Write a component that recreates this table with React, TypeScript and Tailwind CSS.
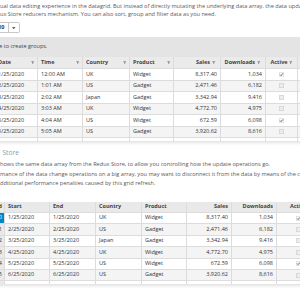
import React from 'react';

type Row = {
  date: string;
  time: string;
  country: string;
  product: string;
  sales: string;
  downloads: string;
  active: boolean;
};

const rows: Row[] = [
  { date: '1/25/2020', time: '12:00 AM', country: 'UK', product: 'Widget', sales: '8,317.40', downloads: '1,034', active: true },
  { date: '2/25/2020', time: '1:01 AM', country: 'US', product: 'Gadget', sales: '2,471.46', downloads: '6,182', active: false },
  { date: '3/25/2020', time: '2:02 AM', country: 'Japan', product: 'Gadget', sales: '3,342.94', downloads: '9,416', active: false },
  { date: '4/25/2020', time: '3:03 AM', country: 'UK', product: 'Widget', sales: '4,772.70', downloads: '4,975', active: false },
  { date: '5/25/2020', time: '4:04 AM', country: 'US', product: 'Widget', sales: '672.59', downloads: '6,098', active: true },
  { date: '6/25/2020', time: '5:05 AM', country: 'US', product: 'Gadget', sales: '3,920.62', downloads: '8,616', active: false },
  { date: '7/25/2020', time: '6:06 AM', country: 'Japan', product: 'Gadget', sales: '7,133.11', downloads: '1,453', active: false },
];

function FilterIcon() {
  return (
    <svg className="w-[3.5px] h-[3.5px] shrink-0" viewBox="0 0 6 6">
      <path d="M0 0.5h6L3.7 3.2V6L2.3 5V3.2z" fill="#8a8a8a" />
    </svg>
  );
}

function Check({ on }: { on: boolean }) {
  return (
    <svg className="w-[5px] h-[5px]" viewBox="0 0 10 10">
      <rect x="0.5" y="0.5" width="9" height="9" rx="1" fill={on ? '#fff' : '#ececec'} stroke="#b5b5b5" />
      {on && <path d="M2.3 5.2l1.9 1.9 3.6-4.2" fill="none" stroke="#333" strokeWidth="1.6" />}
    </svg>
  );
}

const cell = 'shrink-0 flex items-center px-[3px] border-r border-b border-[#dcdcdc] whitespace-nowrap';

function GridTop() {
  return (
    <div className="h-[84px] overflow-hidden -ml-[5px] w-[320px] shadow-[0_2px_3px_rgba(0,0,0,0.12)]">
      <div className="flex h-[12px] bg-[#ebebeb] font-bold text-[#444]">
        <div className={`${cell} w-[43px] justify-between border-[#cfcfcf]`}>Date<FilterIcon /></div>
        <div className={`${cell} w-[45px] justify-between border-[#cfcfcf]`}>Time<FilterIcon /></div>
        <div className={`${cell} w-[47px] justify-between border-[#cfcfcf]`}>Country<FilterIcon /></div>
        <div className={`${cell} w-[44px] justify-between border-[#cfcfcf]`}>Product<FilterIcon /></div>
        <div className={`${cell} w-[47px] justify-end gap-[2px] border-[#cfcfcf] pr-[4.5px]`}>Sales<FilterIcon /></div>
        <div className={`${cell} w-[45px] justify-end gap-[2px] border-[#cfcfcf] pr-[4.5px]`}>Downloads<FilterIcon /></div>
        <div className={`${cell} w-[32px] justify-between border-[#cfcfcf] pr-[4.5px]`}><span className="flex-1 text-center">Active</span><FilterIcon /></div>
        <div className={`${cell} w-[30px] border-[#cfcfcf]`} />
      </div>
      {rows.map((r, i) => (
        <div key={i} className={`flex h-[11.5px] text-[#333] ${i % 2 ? 'bg-[#f4f4f4]' : 'bg-white'}`}>
          <div className={`${cell} w-[43px]`}>{r.date}</div>
          <div className={`${cell} w-[45px]`}>{r.time}</div>
          <div className={`${cell} w-[47px]`}>{r.country}</div>
          <div className={`${cell} w-[44px]`}>{r.product}</div>
          <div className={`${cell} w-[47px] justify-end`}>{r.sales}</div>
          <div className={`${cell} w-[45px] justify-end`}>{r.downloads}</div>
          <div className={`${cell} w-[32px] justify-center`}><Check on={r.active} /></div>
          <div className={`${cell} w-[30px]`} />
        </div>
      ))}
    </div>
  );
}

function GridBottom() {
  return (
    <div className="h-[82px] overflow-hidden -ml-[9px] w-[340px] shadow-[0_2px_3px_rgba(0,0,0,0.12)]">
      <div className="flex h-[11px] bg-[#e9e9e9] font-bold text-[#444]">
        <div className={`${cell} w-[14px] justify-end pr-[2px] border-[#cfcfcf]`}>Id</div>
        <div className={`${cell} w-[45px] border-[#cfcfcf]`}>Start</div>
        <div className={`${cell} w-[46px] border-[#cfcfcf]`}>End</div>
        <div className={`${cell} w-[46px] border-[#cfcfcf]`}>Country</div>
        <div className={`${cell} w-[45px] border-[#cfcfcf]`}>Product</div>
        <div className={`${cell} w-[45px] justify-end border-[#cfcfcf]`}>Sales</div>
        <div className={`${cell} w-[45px] justify-end border-[#cfcfcf]`}>Downloads</div>
        <div className={`${cell} w-[44px] justify-center border-[#cfcfcf]`}>Active</div>
      </div>
      {rows.map((r, i) => (
        <div key={i} className={`flex h-[11.4px] text-[#333] ${i % 2 ? 'bg-[#f4f4f4]' : 'bg-white'}`}>
          <div className={`${cell} w-[14px] justify-end pr-[2px] ${i === 0 ? 'bg-[#0085c7] text-white' : 'bg-[#e9e9e9]'}`}>{i}</div>
          <div className={`${cell} w-[45px]`}>{r.date}</div>
          <div className={`${cell} w-[46px]`}>{r.date}</div>
          <div className={`${cell} w-[46px]`}>{r.country}</div>
          <div className={`${cell} w-[45px]`}>{r.product}</div>
          <div className={`${cell} w-[45px] justify-end`}>{r.sales}</div>
          <div className={`${cell} w-[45px] justify-end`}>{r.downloads}</div>
          <div className={`${cell} w-[44px] justify-center`}><Check on={r.active} /></div>
        </div>
      ))}
    </div>
  );
}

export default function App() {
  return (
    <div
      className="w-[300px] h-[300px] overflow-hidden bg-white text-[5.5px] leading-none"
      style={{ fontFamily: '"Open Sans", "Noto Sans", sans-serif' }}
    >
      <div className="pt-[1.5px] text-[5.6px] text-[#595959] leading-[8.6px] whitespace-nowrap">
        <div>ual data editing experience in the datagrid. But instead of directly mutating the underlying data array, the data updates</div>
        <div>ux Store reducers mechanism. You can also sort, group and filter data as you need.</div>
      </div>

      {/* page size picker */}
      <div className="mt-[3.5px] flex h-[11px] w-[30px] -ml-[10px] rounded-[1.5px] border border-[#c8c8c8] bg-white">
        <div className="flex w-[17px] items-center justify-end pr-[3.5px] font-bold text-[#333]">10</div>
        <div className="flex flex-1 items-center justify-center border-l border-[#c8c8c8]">
          <svg className="w-[3.5px] h-[2px]" viewBox="0 0 6 3">
            <path d="M0 0h6L3 3z" fill="#333" />
          </svg>
        </div>
      </div>

      {/* group panel */}
      <div className="mt-[4px] flex h-[20px] items-center bg-[#e4e4e4] text-[#444] whitespace-nowrap">
        <span className="-ml-[3px]">re to create groups.</span>
      </div>

      <GridTop />

      <div className="mt-[7px] text-[6.6px] leading-[9px] text-[#7d9cb3] whitespace-nowrap pl-[2.5px]">Store</div>
      <div className="mt-[3px] text-[5.6px] text-[#595959] leading-[8.8px] whitespace-nowrap">
        <p>hows the same data array from the Redux Store, to allow you controlling how the update operations go.</p>
        <p className="mt-[1.4px]">mance of the data change operations on a big array, you may want to disconnect it from the data by means of the corresponding</p>
        <p>dditional performance penalties caused by this grid refresh.</p>
      </div>

      <div className="mt-[14px]">
        <GridBottom />
      </div>
    </div>
  );
}
